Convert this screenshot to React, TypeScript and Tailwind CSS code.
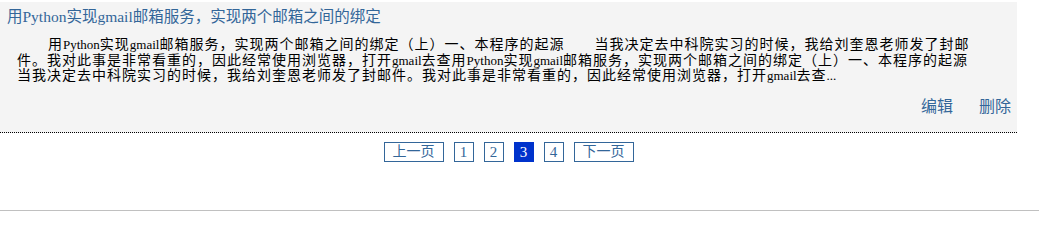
import React from "react";

const serif = "font-['Liberation_Serif','Noto_Sans_CJK_SC',serif]";

// Latin words in the summary run a little smaller than the CJK text
function En({ children }: { children: React.ReactNode }) {
  return <span className="text-[13px] tracking-normal leading-none">{children}</span>;
}

export default function App() {
  const pages = [1, 2, 3, 4];
  const current = 3;

  return (
    <div className={`w-full h-[211px] bg-white flex flex-col ${serif}`}>
      <div className="w-[1017px]">
        {/* Article item */}
        <div className="mt-[2px] h-[131px] bg-[#f4f4f4] border-b border-dotted border-black pl-[7px] pr-[6px] pt-[5px] flex flex-col">
          <h3 className="text-[15.5px] leading-[20px] text-[#336699] font-normal">
            用Python实现gmail邮箱服务，实现两个邮箱之间的绑定
          </h3>
          <p className="mt-[10px] pl-[10px] pr-[39px] indent-[31px] text-[14px] tracking-[1px] leading-[15.5px] text-black">
            用<En>Python</En>实现<En>gmail</En>邮箱服务，实现两个邮箱之间的绑定（上）一、本程序的起源　　当我决定去中科院实习的时候，我给刘奎恩老师发了封邮件。我对此事是非常看重的，因此经常使用浏览器，打开<En>gmail</En>去查用<En>Python</En>实现<En>gmail</En>邮箱服务，实现两个邮箱之间的绑定（上）一、本程序的起源　　当我决定去中科院实习的时候，我给刘奎恩老师发了封邮件。我对此事是非常看重的，因此经常使用浏览器，打开<En>gmail</En>去查<En>...</En>
          </p>
          <div className="mt-[13px] flex justify-end gap-[26px] text-[16px] leading-[20px] text-[#336699]">
            <a href="#">编辑</a>
            <a href="#">删除</a>
          </div>
        </div>

        {/* Pagination */}
        <div className="mt-[9px] flex justify-center gap-[10px] text-[14px] leading-[18px] text-[#336699]">
          <a href="#" className="w-[60px] h-[20px] flex items-center justify-center border border-[#336699]">
            上一页
          </a>
          {pages.map((p) =>
            p === current ? (
              <span
                key={p}
                className="w-[20px] h-[20px] flex items-center justify-center border border-[#0033cc] bg-[#0033cc] text-white text-[15px]"
              >
                {p}
              </span>
            ) : (
              <a
                key={p}
                href="#"
                className="w-[20px] h-[20px] flex items-center justify-center border border-[#336699] text-[15px]"
              >
                {p}
              </a>
            )
          )}
          <a href="#" className="w-[60px] h-[20px] flex items-center justify-center border border-[#336699]">
            下一页
          </a>
        </div>
      </div>

      <div className="mt-auto border-t border-[#c0c0c0]" />
    </div>
  );
}
